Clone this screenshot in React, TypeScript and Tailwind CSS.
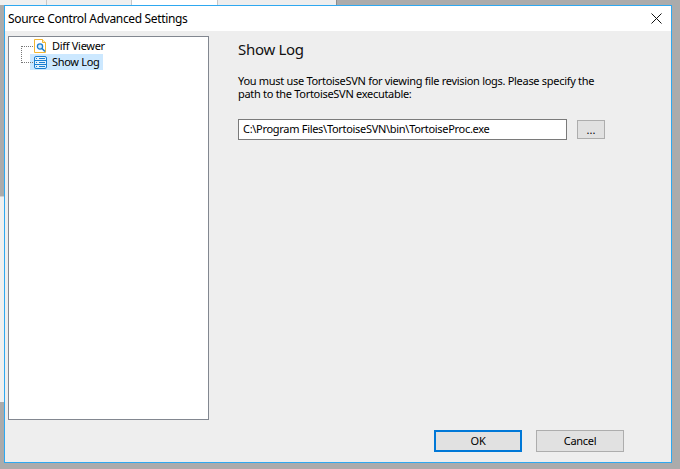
const CloseIcon = () => (
  <svg width="11" height="11" viewBox="0 0 11 11" fill="none" className="shrink-0">
    <path d="M0.5 0.5L10.5 10.5M10.5 0.5L0.5 10.5" stroke="#111" strokeWidth="1" />
  </svg>
);

const TreeIconDiff = () => (
  <svg width="13" height="14" viewBox="0 0 13 14" fill="none" className="shrink-0">
    <path d="M0.5 0.5H8.5L11.5 3.5V13.5H0.5Z" fill="#fff" stroke="#f2b632" />
    <path d="M8.5 0.5V3.5H11.5" fill="#fdf0c8" stroke="#f2b632" />
    <circle cx="6" cy="7.5" r="2.6" fill="#d9ecfa" stroke="#1b7fd1" strokeWidth="1.3" />
    <path d="M8 9.5L11 12.5" stroke="#1b7fd1" strokeWidth="1.6" />
  </svg>
);

const TreeIconLog = () => (
  <svg width="13" height="13" viewBox="0 0 13 13" fill="none" className="shrink-0">
    <rect x="0.5" y="0.5" width="12" height="12" rx="1.5" fill="#e4f2fc" stroke="#1b7fd1" />
    <path d="M0.5 4.5H12.5M0.5 8.5H12.5" stroke="#1b7fd1" />
    <path d="M2 2.5H3M5 2.5H11M2 6.5H3M5 6.5H11M2 10.5H3M5 10.5H11" stroke="#1b7fd1" />
  </svg>
);

export default function App() {
  return (
    <div className="relative h-[469px] w-[680px] overflow-hidden bg-[#ababab] font-['Noto_Sans',sans-serif] text-[11px] text-black">
      {/* tabs of the window behind the dialog */}
      <div className="flex h-[5px]">
        <div className="w-[47px] border-r border-[#c8c8c8] bg-[#f0f0f0]" />
        <div className="w-[85px] border-r border-[#c8c8c8] bg-[#f0f0f0]" />
        <div className="w-[86px] border-r border-[#c8c8c8] bg-white" />
        <div className="w-[119px] border-r border-[#8c8c8c] bg-[#eeeeee]" />
      </div>
      {/* panel of the window behind, showing left of the dialog */}
      <div className="absolute left-0 top-[196px] h-[206px] w-[4px] border-t border-[#d0d0d0] bg-[#f0f0f0]" />

      <div className="relative ml-[4px] flex h-[458px] w-[668px] flex-col border border-[#2ea8f0] bg-[#eeeeee]">
        <div className="flex h-[25px] shrink-0 items-center justify-between bg-white pl-[3px] pr-[9px]">
          <span className="text-[12px] tracking-[-0.34px]">Source Control Advanced Settings</span>
          <CloseIcon />
        </div>

        <div className="flex min-h-0 flex-1 pl-[3px] pt-[5px]">
          <div className="h-[384px] w-[201px] shrink-0 border border-[#828790] bg-white">
            <div className="relative pl-[21px] pt-[1px]">
              <div className="absolute left-[12px] top-[9px] h-[17px] w-[12px] border-b border-l border-dotted border-[#777]" />
              <div className="absolute left-[12px] top-[9px] w-[12px] border-t border-dotted border-[#777]" />
              <div className="flex h-[16px] items-center gap-[5px] pl-[4px]">
                <TreeIconDiff />
                <span className="tracking-[-0.3px]">Diff Viewer</span>
              </div>
              <div className="flex h-[16px] w-[73px] items-center gap-[5px] bg-[#cce8ff] pl-[4px]">
                <TreeIconLog />
                <span className="tracking-[-0.3px]">Show Log</span>
              </div>
            </div>
          </div>

          <div className="flex flex-1 flex-col pl-[29px]">
            <div className="mt-[3px] text-[15px] leading-[20px] tracking-[-0.3px] text-[#111]">Show Log</div>
            <p className="mt-[15px] w-[365px] leading-[13px] tracking-[-0.3px]">
              You must use TortoiseSVN for viewing file revision logs. Please specify the path to the TortoiseSVN executable:
            </p>
            <div className="mt-[19px] flex items-center gap-[10px]">
              <div className="flex h-[21px] w-[329px] items-center border border-[#7a7a7a] bg-white pl-[4px] tracking-[-0.3px]">
                C:\Program Files\TortoiseSVN\bin\TortoiseProc.exe
              </div>
              <button className="h-[19px] w-[28px] border border-[#adadad] bg-[#e1e1e1] leading-[17px]">...</button>
            </div>
            <div className="mt-[290px] flex gap-[14px] pl-[196px]">
              <button className="h-[22px] w-[88px] border-2 border-[#0078d7] bg-[#e1e1e1] tracking-[-0.3px]">OK</button>
              <button className="h-[22px] w-[88px] border border-[#adadad] bg-[#e1e1e1] tracking-[-0.3px]">Cancel</button>
            </div>
          </div>
        </div>
      </div>
    </div>
  );
}
